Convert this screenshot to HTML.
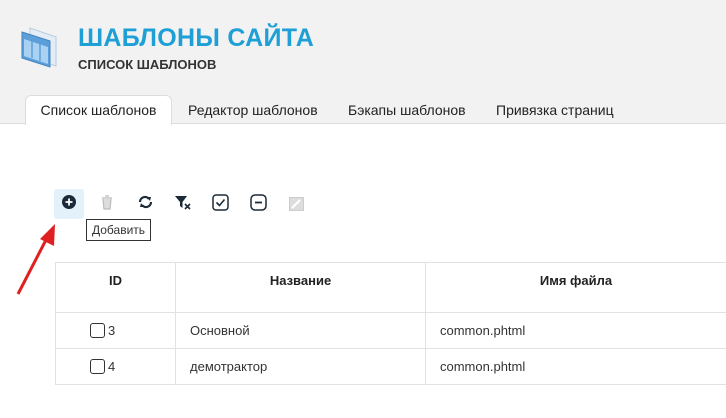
<!DOCTYPE html>
<html><head><meta charset="utf-8"><style>
body{margin:0;width:726px;height:418px;background:#fff;font-family:"Liberation Sans","DejaVu Sans",sans-serif;position:relative;overflow:hidden}
.hdr{position:absolute;left:0;top:0;width:726px;height:123px;background:#f2f2f2;border-bottom:1px solid #ddd}
.t1{position:absolute;left:78px;top:24px;font-size:25px;font-weight:bold;color:#1e9fd6;letter-spacing:0.3px}
.t2{position:absolute;left:78px;top:57px;font-size:13px;font-weight:bold;color:#333}
.tab{position:absolute;top:102px;font-size:14px;color:#222}
.act{left:25px;top:95px;width:145px;height:29px;background:#fff;border:1px solid #ddd;border-bottom:none;border-radius:6px 6px 0 0;text-align:center;line-height:29px}
.ic{position:absolute;top:194px}
.tip{position:absolute;left:86px;top:219px;border:1px solid #333;background:#fff;font-size:12px;padding:3px 5px;color:#333}
table{position:absolute;left:55px;top:262px;border-collapse:collapse;width:672px;table-layout:fixed;font-size:13px;color:#333}
td,th{border:1px solid #e2e2e2;box-sizing:border-box;padding-top:0;padding-bottom:0}
th{height:50px;padding-bottom:14px;font-size:13px;font-weight:bold;color:#222}
td{height:36px;padding-left:14px}
.cb{display:inline-block;width:13px;height:13px;border:1px solid #333;border-radius:3px;vertical-align:-3px;margin-right:3px}
</style></head><body>
<div class="hdr"></div>
<svg style="position:absolute;left:20px;top:26px" width="38" height="42" viewBox="0 0 38 42">
<polygon points="10,2 36,11 36,40 10,31" fill="#e4edf5" stroke="#b8cce0"/>
<polygon points="2,6 30,15 30,41 2,32" fill="#5c9fd8" stroke="#3f83c0"/>
<polygon points="4,13 28,21 28,38 4,30" fill="#a9d1f2"/>
<line x1="12" y1="15" x2="12" y2="32" stroke="#5c9fd8" stroke-width="1.5"/>
<line x1="20" y1="18" x2="20" y2="35" stroke="#5c9fd8" stroke-width="1.5"/>
</svg>
<div class="t1">ШАБЛОНЫ САЙТА</div>
<div class="t2">СПИСОК ШАБЛОНОВ</div>
<div class="tab act">Список шаблонов</div>
<div class="tab" style="left:188px">Редактор шаблонов</div>
<div class="tab" style="left:348px">Бэкапы шаблонов</div>
<div class="tab" style="left:496px">Привязка страниц</div>
<div style="position:absolute;left:54px;top:189px;width:30px;height:30px;background:#e3f1fb;border-radius:3px"></div>
<svg class="ic" style="left:61px" width="16" height="16"><circle cx="8" cy="8" r="7" fill="#1b2a38"/><path d="M8 4.5v7M4.5 8h7" stroke="#fff" stroke-width="1.8"/></svg>
<svg class="ic" style="left:100px" width="14" height="16"><path d="M2 4h10M5 2h4M3 5l1 10h6l1-10" stroke="#bbb" fill="#ddd" stroke-width="1.2"/></svg>
<svg class="ic" style="left:137px" width="17" height="16"><path d="M3 8a5 5 0 0 1 9-3M14 8a5 5 0 0 1-9 3" stroke="#1b2a38" stroke-width="2.2" fill="none"/><path d="M10 3l4 0-1 4zM7 13l-4 0 1-4z" fill="#1b2a38"/></svg>
<svg class="ic" style="left:174px" width="18" height="16"><path d="M1 2h12L8.5 8v6L6 12V8z" fill="#1b2a38"/><path d="M11 10l5 5M16 10l-5 5" stroke="#1b2a38" stroke-width="1.6"/></svg>
<svg class="ic" style="left:212px" width="17" height="17"><rect x="1" y="1" width="15" height="15" rx="3" fill="none" stroke="#1b2a38" stroke-width="1.5"/><path d="M4.5 8.5l3 3 5-6" stroke="#1b2a38" stroke-width="1.6" fill="none"/></svg>
<svg class="ic" style="left:250px" width="17" height="17"><rect x="1" y="1" width="15" height="15" rx="4" fill="none" stroke="#1b2a38" stroke-width="1.5"/><path d="M5 8.5h7" stroke="#1b2a38" stroke-width="1.8"/></svg>
<svg class="ic" style="left:289px;top:197px" width="15" height="14"><rect x="0.5" y="0.5" width="14" height="13" fill="#ddd" stroke="#ccc"/><path d="M3 11l8-8" stroke="#fff" stroke-width="2"/></svg>
<div class="tip">Добавить</div>
<svg style="position:absolute;left:10px;top:220px" width="50" height="80"><line x1="8" y1="74" x2="38" y2="16" stroke="#e02020" stroke-width="3"/><polygon points="45,4 44,26 30,19" fill="#e02020"/></svg>
<table>
<colgroup><col style="width:120px"><col style="width:250px"><col></colgroup>
<tr><th>ID</th><th>Название</th><th>Имя файла</th></tr>
<tr><td style="padding-left:34px"><span class="cb"></span>3</td><td>Основной</td><td>common.phtml</td></tr>
<tr><td style="padding-left:34px"><span class="cb"></span>4</td><td>демотрактор</td><td>common.phtml</td></tr>
</table>
</body></html>
